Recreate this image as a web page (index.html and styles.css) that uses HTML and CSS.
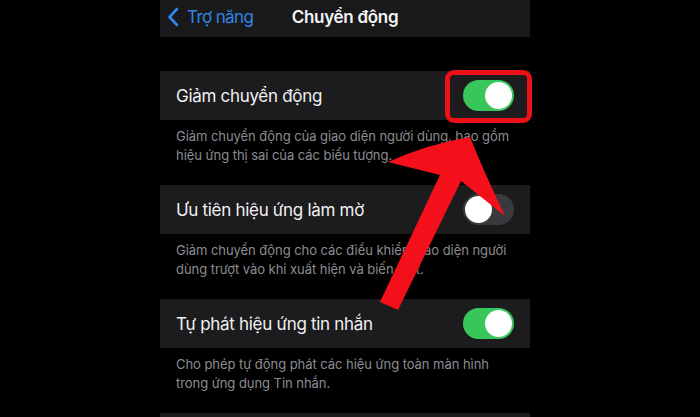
FILE: index.html
```html
<!DOCTYPE html>
<html lang="vi">
<head>
<meta charset="utf-8">
<title>Chuyển động</title>
<link rel="stylesheet" href="styles.css">
</head>
<body>
<div class="screen">
  <header class="nav">
    <a class="back">
      <svg class="chev" width="12" height="20" viewBox="0 0 12 20"><path d="M10 2 L2.5 10 L10 18" fill="none" stroke="#2f86e6" stroke-width="2.6" stroke-linecap="round" stroke-linejoin="round"/></svg>
      <span>Trợ năng</span>
    </a>
    <h1 class="title">Chuyển động</h1>
    <span></span>
  </header>

  <section class="group">
    <div class="cell"><span class="label">Giảm chuyển động</span><span class="switch on"></span></div>
    <p class="footer">Giảm chuyển động của giao diện người dùng, bao gồm<br>hiệu ứng thị sai của các biểu tượng.</p>
  </section>

  <section class="group">
    <div class="cell"><span class="label">Ưu tiên hiệu ứng làm mờ</span><span class="switch off"></span></div>
    <p class="footer">Giảm chuyển động cho các điều khiển giao diện người<br>dùng trượt vào khi xuất hiện và biến mất.</p>
  </section>

  <section class="group">
    <div class="cell"><span class="label">Tự phát hiệu ứng tin nhắn</span><span class="switch on"></span></div>
    <p class="footer">Cho phép tự động phát các hiệu ứng toàn màn hình<br>trong ứng dụng Tin nhắn.</p>
  </section>

  <div class="cell stub"></div>
</div>

<div class="highlight"></div>
<svg class="arrow" width="700" height="417" viewBox="0 0 700 417">
  <path d="M470 137 Q484 172 505 216 L461 181 L398 310 L380 302 L440 175 L388 162 Q428 144 470 137 Z" fill="#f3101a"/>
</svg>
</body>
</html>
```

FILE: styles.css
```css
html, body {
  margin: 0;
  padding: 0;
  background: #000;
}
body {
  width: 700px;
  height: 417px;
  overflow: hidden;
  position: relative;
  font-family: Inter, "Noto Sans", "DejaVu Sans", sans-serif;
  color: #f2f2f4;
}
.screen {
  margin-left: 160px;
  width: 370px;
}
.nav {
  height: 37px;
  box-sizing: border-box;
  background: #19191b;
  display: grid;
  grid-template-columns: 1fr auto 1fr;
  align-items: center;
  padding: 0 7px 4px;
  margin-bottom: 34px;
}
.back {
  display: flex;
  align-items: center;
  gap: 8px;
  color: #2f86e6;
  font-size: 17px;
  letter-spacing: -0.6px;
}
.chev {
  display: block;
}
.title {
  margin: 0;
  font-size: 17px;
  font-weight: 600;
  letter-spacing: -0.3px;
  color: #f4f4f6;
}
.cell {
  height: 49px;
  background: #1c1c1e;
  display: flex;
  align-items: center;
  justify-content: space-between;
  padding: 0 16px;
}
.stub {
  height: 4px;
}
.label {
  font-size: 17px;
  letter-spacing: -0.3px;
  color: #f0f0f2;
}
.footer {
  margin: 0;
  padding: 7px 16px 20px;
  font-size: 13px;
  line-height: 19px;
  color: #8c8c91;
  letter-spacing: -0.05px;
}
.switch {
  position: relative;
  width: 51px;
  height: 31px;
  border-radius: 16px;
  flex: none;
}
.switch::after {
  content: "";
  position: absolute;
  top: 2px;
  width: 27px;
  height: 27px;
  border-radius: 50%;
  background: #fff;
}
.switch.on {
  background: #38c65b;
}
.switch.on::after {
  right: 2px;
}
.switch.off {
  background: #3a3a3e;
}
.switch.off::after {
  left: 2px;
}
.highlight {
  position: absolute;
  left: 445px;
  top: 70px;
  width: 87px;
  height: 53px;
  box-sizing: border-box;
  border: 5px solid #ee1018;
  border-radius: 9px;
}
.arrow {
  position: absolute;
  left: 0;
  top: 0;
}
```
